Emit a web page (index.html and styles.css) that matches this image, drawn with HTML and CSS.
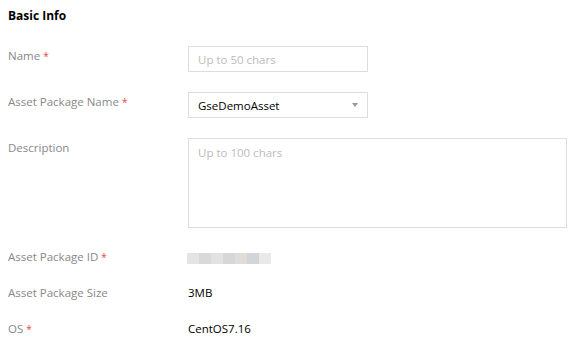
FILE: index.html
```html
<!DOCTYPE html>
<html lang="en">

<head>
    <meta charset="UTF-8">
    <meta name="viewport" content="width=device-width, initial-scale=1.0">
    <title>Basic Info</title>
    <link rel="stylesheet" href="styles.css">
</head>

<body>
    <div class="panel">
        <h3 class="panel-title">Basic Info</h3>

        <div class="form">
            <div class="form-row">
                <label class="form-label">Name<span class="required">*</span></label>
                <div class="form-control">
                    <input type="text" class="text-input" placeholder="Up to 50 chars">
                </div>
            </div>

            <div class="form-row">
                <label class="form-label">Asset Package Name<span class="required">*</span></label>
                <div class="form-control">
                    <div class="select-box">
                        <span>GseDemoAsset</span>
                        <i class="select-arrow"></i>
                    </div>
                </div>
            </div>

            <div class="form-row">
                <label class="form-label">Description</label>
                <div class="form-control">
                    <textarea class="text-area" placeholder="Up to 100 chars"></textarea>
                </div>
            </div>

            <div class="form-row static">
                <label class="form-label">Asset Package ID<span class="required">*</span></label>
                <div class="form-value">
                    <!-- id is masked in the screenshot -->
                    <div class="masked">
                        <span></span><span></span><span></span><span></span><span></span><span></span><span></span>
                    </div>
                </div>
            </div>

            <div class="form-row static">
                <label class="form-label">Asset Package Size</label>
                <div class="form-value">3MB</div>
            </div>

            <div class="form-row static">
                <label class="form-label">OS<span class="required">*</span></label>
                <div class="form-value">CentOS7.16</div>
            </div>
        </div>
    </div>
</body>

</html>
```

FILE: styles.css
```css
body {
    font-family: "Open Sans", "Noto Sans", Arial, sans-serif;
    font-size: 11.5px;
    color: #000;
    background-color: #fff;
    margin: 0;
    padding: 0;
}

.panel {
    padding: 6px 8px 0 8px;
}

.panel-title {
    margin: 0;
    font-size: 12px;
    font-weight: bold;
    line-height: 20px;
}

.form {
    display: flex;
    flex-direction: column;
    gap: 20px;
    margin-top: 20px;
}

.form-row {
    display: flex;
    align-items: flex-start;
}

.form-row.static + .form-row.static {
    margin-top: -2px;
}

.form-label {
    width: 180px;
    flex-shrink: 0;
    color: #888;
    line-height: 18px;
    padding-top: 1px;
}

.static .form-label {
    padding-top: 0;
}

.required {
    color: #e54545;
    font-size: 10px;
    margin-left: 3px;
    vertical-align: top;
}

.form-control {
    flex: 1;
}

.text-input,
.select-box {
    box-sizing: border-box;
    width: 180px;
    height: 26px;
    border: 1px solid #ddd;
    padding: 0 9px;
    font-family: inherit;
    font-size: 11.5px;
    color: #000;
    outline: none;
}

.text-input::placeholder,
.text-area::placeholder {
    color: #bbb;
}

.select-box {
    display: flex;
    align-items: center;
    justify-content: space-between;
}

.select-arrow {
    width: 0;
    height: 0;
    border-left: 3.5px solid transparent;
    border-right: 3.5px solid transparent;
    border-top: 4px solid #999;
}

.text-area {
    display: block;
    box-sizing: border-box;
    width: 379px;
    height: 90px;
    border: 1px solid #ddd;
    padding: 6px 9px;
    font-family: inherit;
    font-size: 11.5px;
    resize: none;
    outline: none;
}

.form-value {
    line-height: 18px;
    color: #000;
}

.masked {
    display: flex;
    height: 11px;
    margin-top: 5px;
    margin-left: -1px;
}

.masked span {
    width: 12px;
    height: 100%;
    background-color: #e4e4e4;
}

.masked span:nth-child(2) { background-color: #d9d9d9; }
.masked span:nth-child(3) { background-color: #e2e2e2; }
.masked span:nth-child(4) { background-color: #d7d7d7; }
.masked span:nth-child(5) { background-color: #e0dcd9; }
.masked span:nth-child(6) { background-color: #d2d5d9; }
.masked span:nth-child(7) { background-color: #e9e9e9; }
```
